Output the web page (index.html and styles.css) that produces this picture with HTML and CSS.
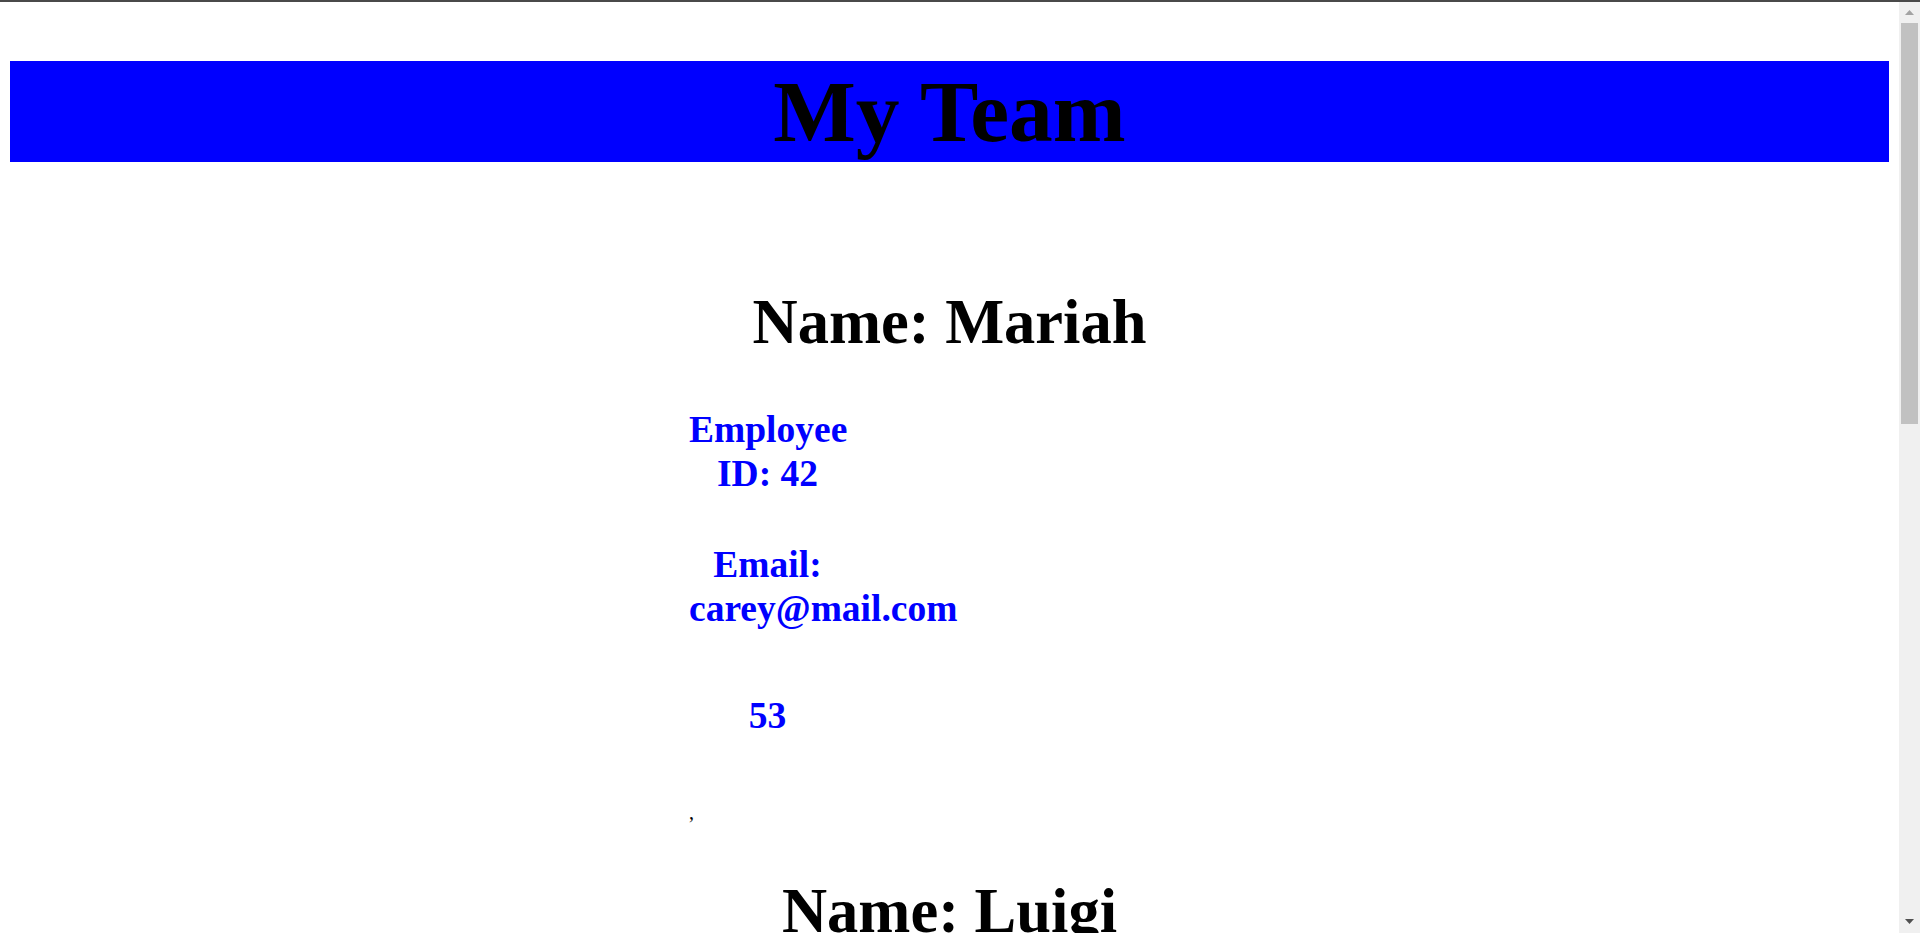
FILE: index.html
```html
<!DOCTYPE html>
<html lang="en">
<head>
<meta charset="utf-8">
<title>My Team</title>
<link rel="stylesheet" href="styles.css">
</head>
<body>
<div class="topline"></div>
<div class="window">
  <main class="page">
    <header class="banner">
      <h1 class="banner-title">My Team</h1>
    </header>
    <section class="card">
      <h2 class="name">Name: Mariah</h2>
      <div class="info">
        <p class="field field-id">Employee ID: 42</p>
        <p class="field field-email">Email: carey@mail.com</p>
        <p class="field field-office">53</p>
      </div>
      <p class="sep">,</p>
      <h2 class="name name-next">Name: Luigi</h2>
    </section>
  </main>
  <div class="scrollbar">
    <div class="sb-btn">
      <svg width="9" height="5" viewBox="0 0 9 5"><path d="M0 5 L4.5 0 L9 5 Z" fill="#a3a3a3"/></svg>
    </div>
    <div class="sb-track">
      <div class="sb-thumb"></div>
    </div>
    <div class="sb-btn sb-btn-down">
      <svg width="9" height="5" viewBox="0 0 9 5"><path d="M0 0 L9 0 L4.5 5 Z" fill="#505050"/></svg>
    </div>
  </div>
</div>
</body>
</html>
```

FILE: styles.css
```css
html, body {
  margin: 0;
  padding: 0;
  height: 933px;
  overflow: hidden;
  background: #ffffff;
}

body {
  display: flex;
  flex-direction: column;
  font-family: "Liberation Serif", "Times New Roman", serif;
}

.topline {
  height: 2px;
  background: #4a4a4a;
  flex: none;
}

.window {
  flex: 1;
  display: flex;
  flex-direction: row;
  min-height: 0;
}

.page {
  flex: 1;
  padding: 0 10px;
  overflow: hidden;
  display: flex;
  flex-direction: column;
}

.banner {
  margin-top: 59px;
  background: #0000ff;
  height: 101px;
  flex: none;
}

.banner-title {
  margin: 0;
  font-size: 87.5px;
  line-height: 101px;
  font-weight: bold;
  color: #000000;
  text-align: center;
}

.card {
  width: 521px;
  margin: 0 auto;
  display: flex;
  flex-direction: column;
  flex: none;
}

.name {
  margin: 124px 0 0;
  font-size: 62.5px;
  line-height: 72px;
  font-weight: bold;
  color: #000000;
  text-align: center;
  white-space: nowrap;
}

.name-next {
  margin-top: 51px;
}

.info {
  width: 157px;
  display: flex;
  flex-direction: column;
}

.field {
  margin: 0;
  font-size: 37.5px;
  line-height: 44px;
  font-weight: bold;
  color: #0000ff;
  text-align: center;
}

.field-id {
  margin-top: 50px;
}

.field-email {
  margin-top: 47px;
}

.field-office {
  margin-top: 63px;
}

.sep {
  margin: 63px 0 0;
  font-size: 20px;
  line-height: 23px;
  color: #000000;
}

.scrollbar {
  width: 21px;
  flex: none;
  background: #f0f0f0;
  display: flex;
  flex-direction: column;
}

.sb-btn {
  height: 21px;
  display: flex;
  align-items: center;
  justify-content: center;
  flex: none;
}

.sb-btn svg {
  display: block;
}

.sb-btn-down {
  height: 24px;
}

.sb-track {
  flex: 1;
  padding: 0 2px;
}

.sb-thumb {
  height: 401px;
  background: #c1c1c1;
}
```
